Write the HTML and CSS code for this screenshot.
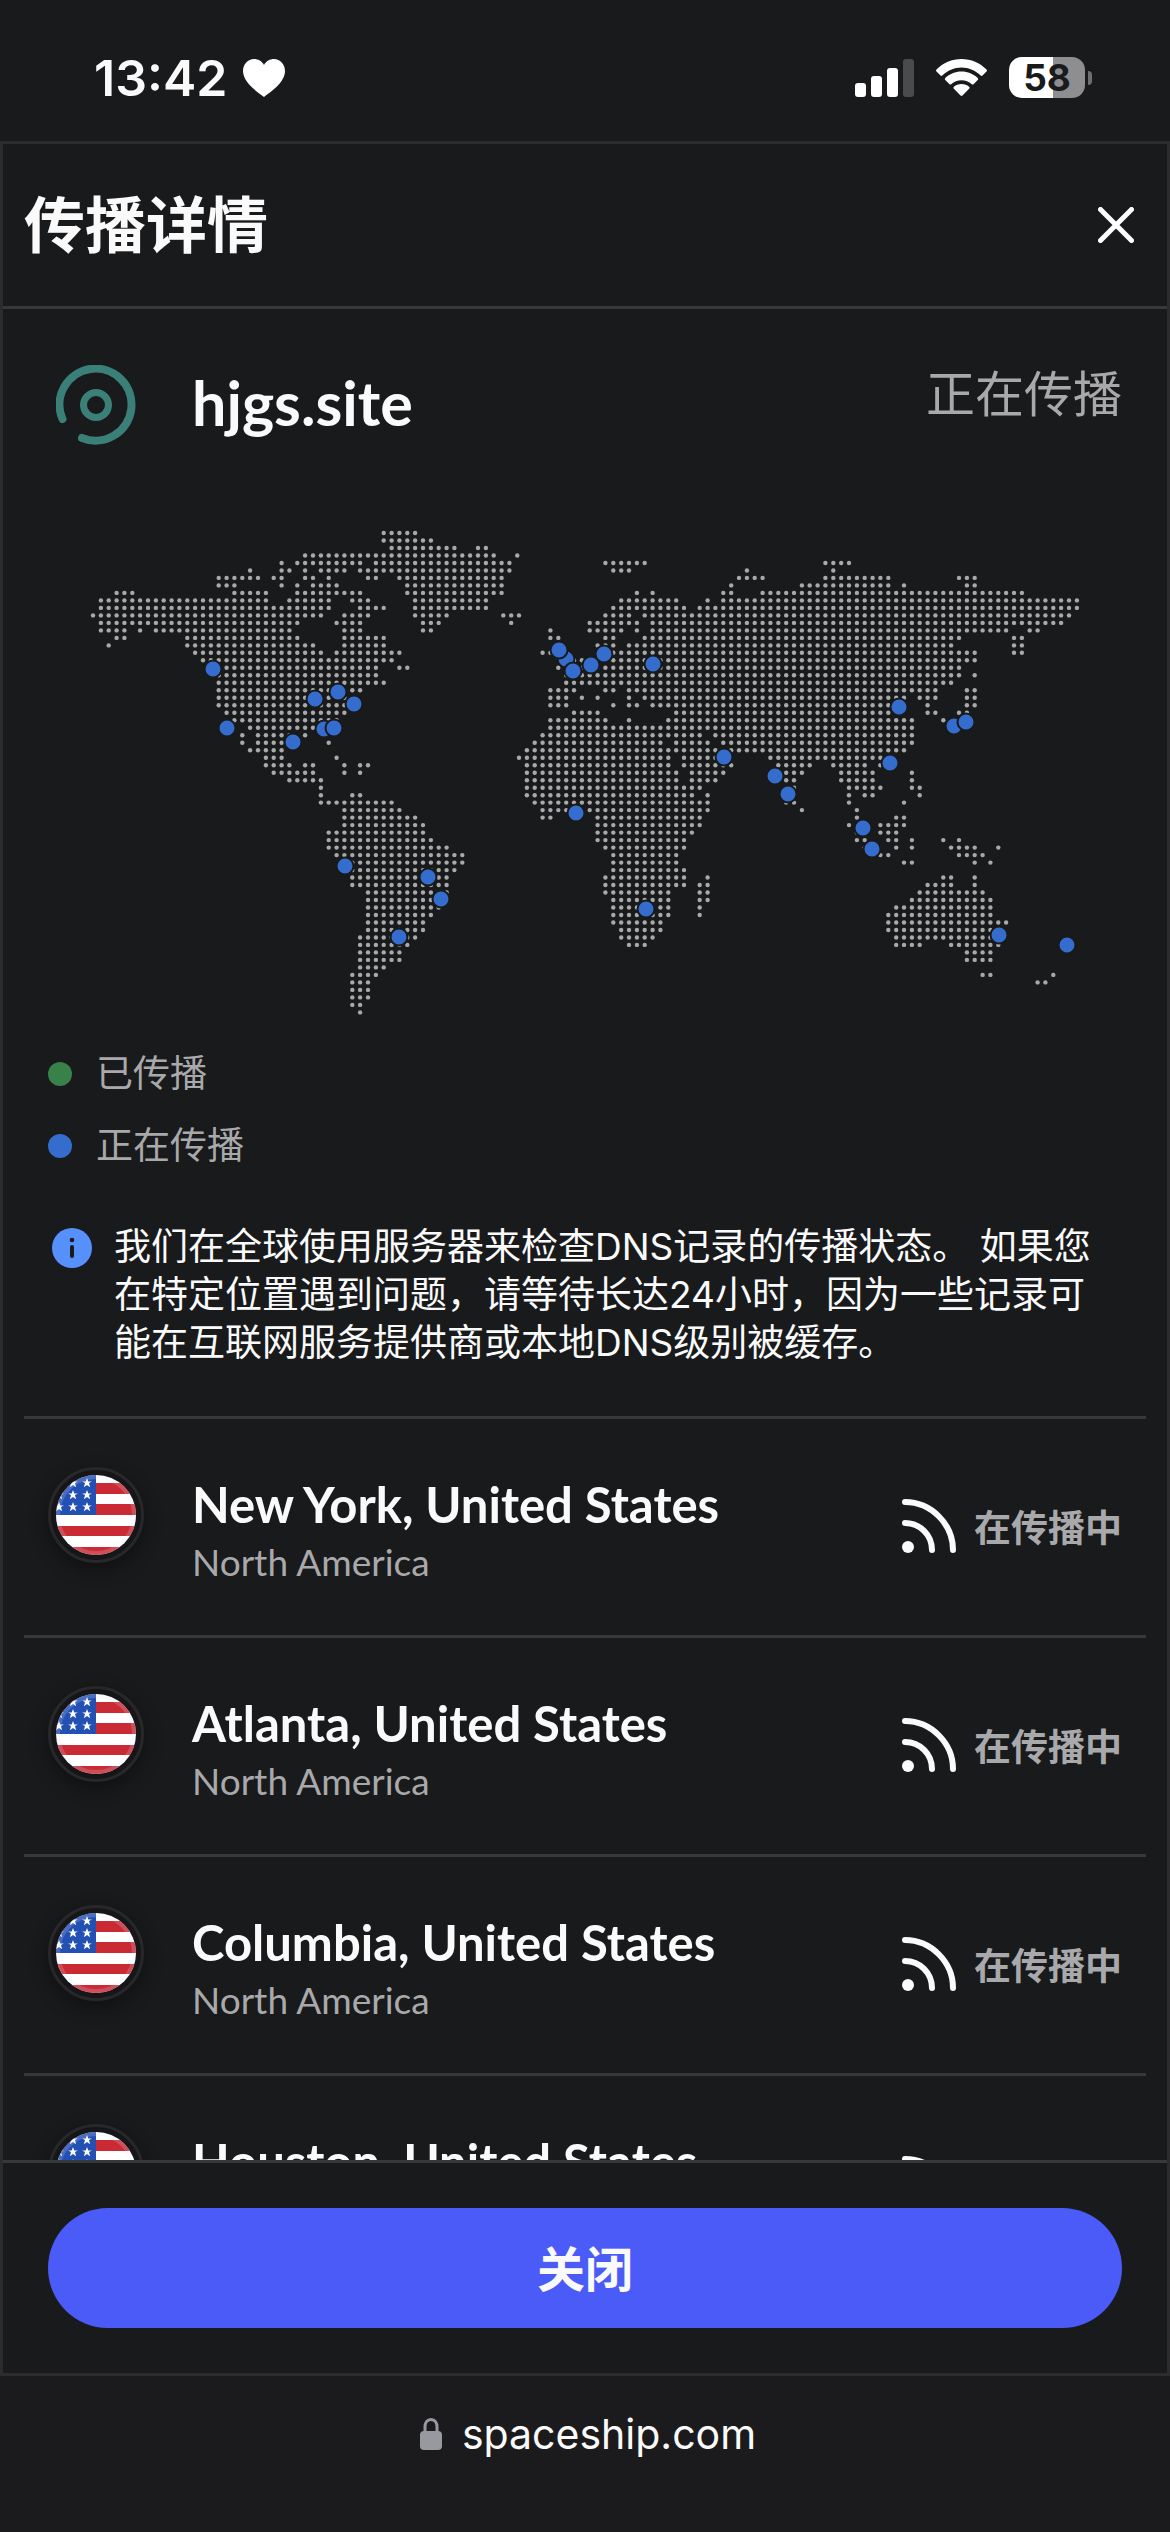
FILE: index.html
```html
<!DOCTYPE html>
<html lang="zh-CN">
<head>
  <meta charset="UTF-8">
  <meta name="viewport" content="width=device-width, initial-scale=1.0">
  <title>传播详情</title>
  <link rel="stylesheet" href="styles.css">
</head>
<body>
  <!-- shared icons -->
  <svg class="sprite" aria-hidden="true">
    <defs>
      <clipPath id="flag-clip"><circle cx="40" cy="40" r="40"/></clipPath>
      <path id="star" d="M0-5 1.3-1.6 4.9-1.5 2-.1 3.1 4.2 0 1.9-3.1 4.2-2-.1-4.9-1.5-1.3-1.6z" fill="#fff"/>
      <symbol id="flag-us" viewBox="0 0 80 80">
        <g clip-path="url(#flag-clip)">
          <path d="M0 0h80v80H0z" fill="#fff"/>
          <path d="M0 8h80v11H0zM0 29h80v11H0zM0 51h80v10H0zM0 72h80v8H0z" fill="#c92a33"/>
          <path d="M0 0h40v40H0z" fill="#2350b3"/>
          <use href="#star" x="17" y="8"/><use href="#star" x="31" y="8"/>
          <use href="#star" x="3" y="20"/><use href="#star" x="17" y="20"/><use href="#star" x="31" y="20"/>
          <use href="#star" x="3" y="32"/><use href="#star" x="17" y="32"/><use href="#star" x="31" y="32"/>
          <circle cx="40" cy="40" r="38" fill="none" stroke="#dfe6f5" stroke-opacity=".2" stroke-width="4"/>
        </g>
      </symbol>
      <symbol id="feed" viewBox="0 0 54 54">
        <circle cx="6" cy="48" r="6" fill="#fafafb"/>
        <path d="M3 3C29 3 51 25 51 51M3 24C18 24 30 36 30 51" fill="none" stroke="#fafafb" stroke-width="6" stroke-linecap="round"/>
      </symbol>
    </defs>
  </svg>

  <div class="status-bar">
    <div class="status-left">
      <span class="time">13:42</span>
      <svg class="heart" viewBox="0 0 42 38"><path d="M21 38C13 32 0 23 0 12 0 5 5 0 11 0c4 0 8 2 10 6 2-4 6-6 10-6 6 0 11 5 11 12 0 11-13 20-21 26z" fill="#fff"/></svg>
    </div>
    <div class="status-right">
      <svg class="signal" viewBox="0 0 59 38" fill="#fff">
        <rect x="0" y="24" width="11" height="14" rx="3"/>
        <rect x="16" y="17" width="11" height="21" rx="3"/>
        <rect x="32" y="9" width="11" height="29" rx="3"/>
        <rect x="48" y="0" width="11" height="38" rx="3" fill="#4a4b4d"/>
      </svg>
      <svg class="wifi" viewBox="0 0 51 37" fill="#fff">
        <path d="M25.500 0C35 0 44 4 50.500 10.500c.6.600.6 1.400 0 2L46.500 16.500c-.5.500-1.300.5-1.800 0C39.500 11.500 32.800 8.500 25.500 8.500S11.500 11.500 6.300 16.500c-.5.500-1.300.5-1.800 0L.5 12.500c-.6-.6-.6-1.400 0-2C7 4 16 0 25.500 0z"/>
        <path d="M25.500 12.500c6.300 0 12 2.500 16.200 6.500.6.600.6 1.400 0 2l-4.200 4.200c-.5.500-1.200.5-1.700 0-2.800-2.500-6.400-4-10.300-4s-7.500 1.500-10.300 4c-.5.500-1.200.5-1.700 0L9.300 21c-.6-.6-.6-1.400 0-2 4.200-4 9.900-6.500 16.200-6.500z"/>
        <path d="M25.500 25c3 0 5.600 1 7.600 2.800.6.500.6 1.300 0 1.900l-6.600 6.800c-.6.600-1.400.6-2 0l-6.600-6.800c-.6-.6-.6-1.400 0-1.900C19.900 26 22.500 25 25.500 25z"/>
      </svg>
      <div class="battery"><span>58</span></div>
    </div>
  </div>

  <main class="sheet">
    <header class="sheet-header">
      <h1>传播详情</h1>
      <button class="close-icon" aria-label="关闭">
        <svg viewBox="0 0 36 36"><path d="M2.500 2.500l31 31M33.500 2.500l-31 31" stroke="#fff" stroke-width="5" stroke-linecap="round"/></svg>
      </button>
    </header>

    <div class="sheet-body">
      <section class="domain">
        <svg class="domain-logo" viewBox="0 0 80 80" fill="none" stroke="#3a8078">
          <path d="M6.500 54A36 36 0 1 1 26 73" stroke-width="8" stroke-linecap="round"/>
          <circle cx="40" cy="40" r="12.500" stroke-width="7"/>
        </svg>
        <h2>hjgs.site</h2>
        <span class="domain-status">正在传播</span>
      </section>

      <svg class="map" id="map" viewBox="0 0 1074 492" role="img" aria-label="DNS"></svg>

      <ul class="legend">
        <li><i class="dot done"></i>已传播</li>
        <li><i class="dot pending"></i>正在传播</li>
      </ul>

      <div class="notice">
        <svg class="info" viewBox="0 0 40 40">
          <circle cx="20" cy="20" r="20" fill="#5590fb"/>
          <circle cx="20" cy="12" r="2.300" fill="#191a1c"/>
          <path d="M20 19v9" stroke="#191a1c" stroke-width="4" stroke-linecap="round"/>
        </svg>
        <p>我们在全球使用服务器来检查DNS记录的传播状态。 如果您在特定位置遇到问题，请等待长达24小时，因为一些记录可能在互联网服务提供商或本地DNS级别被缓存。</p>
      </div>

      <ul class="servers">
        <li>
          <div class="flag"><svg><use href="#flag-us"/></svg></div>
          <div class="place"><h3>New York, United States</h3><p>North America</p></div>
          <div class="state"><svg><use href="#feed"/></svg>在传播中</div>
        </li>
        <li>
          <div class="flag"><svg><use href="#flag-us"/></svg></div>
          <div class="place"><h3>Atlanta, United States</h3><p>North America</p></div>
          <div class="state"><svg><use href="#feed"/></svg>在传播中</div>
        </li>
        <li>
          <div class="flag"><svg><use href="#flag-us"/></svg></div>
          <div class="place"><h3>Columbia, United States</h3><p>North America</p></div>
          <div class="state"><svg><use href="#feed"/></svg>在传播中</div>
        </li>
        <li>
          <div class="flag"><svg><use href="#flag-us"/></svg></div>
          <div class="place"><h3>Houston, United States</h3><p>North America</p></div>
          <div class="state"><svg><use href="#feed"/></svg>在传播中</div>
        </li>
      </ul>
    </div>

    <footer class="sheet-footer">
      <button class="close-button">关闭</button>
    </footer>
  </main>

  <div class="address-bar">
    <svg class="lock" viewBox="0 0 22 32">
      <path d="M5 15V9c0-4 2-7.500 6-7.500S17 5 17 9v6" fill="none" stroke="#98989f" stroke-width="3"/>
      <rect y="13" width="22" height="19" rx="4" fill="#98989f"/>
    </svg>
    <span>spaceship.com</span>
  </div>

  <script src="map.js"></script>
</body>
</html>
```
FILE: styles.css
```css
* {
  box-sizing: border-box;
  margin: 0;
  padding: 0;
}
body {
  display: flex;
  flex-direction: column;
  height: 100vh;
  overflow: hidden;
  background: #191a1c;
  color: #fafafb;
  font-family: Lato, 'Noto Sans CJK SC', sans-serif;
}
svg {
  display: block;
  flex-shrink: 0;
}
ul {
  list-style: none;
}
button {
  border: none;
  background: none;
  color: inherit;
  font-family: inherit;
  cursor: pointer;
}
.sprite {
  position: absolute;
  width: 0;
  height: 0;
}

/* phone status bar */
.status-bar {
  display: flex;
  justify-content: space-between;
  align-items: center;
  height: 141px;
  padding: 14px 78px 0 94px;
  font-family: Inter, sans-serif;
}
.status-left {
  display: flex;
  align-items: center;
  gap: 16px;
}
.time {
  font-size: 50px;
  font-weight: 600;
}
.heart {
  width: 42px;
  height: 38px;
}
.status-right {
  display: flex;
  align-items: center;
  gap: 22px;
}
.signal {
  width: 59px;
  height: 38px;
}
.wifi {
  width: 51px;
  height: 37px;
}
.battery {
  position: relative;
  width: 76px;
  height: 41px;
  margin-right: 7px;
  border-radius: 13px;
  background: linear-gradient(to right, #fff 58%, #8e8e90 58%);
  color: #191a1c;
  font-size: 37px;
  font-weight: 700;
  line-height: 41px;
  text-align: center;
}
.battery::after {
  content: '';
  position: absolute;
  top: 14px;
  right: -7px;
  width: 4px;
  height: 14px;
  border-radius: 0 4px 4px 0;
  background: #6f6f71;
}

/* sheet */
.sheet {
  flex: 1;
  display: flex;
  flex-direction: column;
  min-height: 0;
  border: 3px solid #2c2c2f;
}
.sheet-header {
  display: flex;
  justify-content: space-between;
  align-items: center;
  height: 165px;
  padding: 0 33px 0 21px;
  border-bottom: 3px solid #38383b;
}
.sheet-header h1 {
  padding-bottom: 8px;
  font-size: 61px;
  font-weight: 700;
}
.close-icon svg {
  width: 36px;
  height: 36px;
}
.sheet-body {
  flex: 1;
  min-height: 0;
  overflow: hidden;
  padding: 0 21px;
}
.domain {
  display: flex;
  align-items: flex-start;
  height: 220px;
  padding: 56px 24px 0 32px;
}
.domain-logo {
  width: 80px;
  height: 80px;
  margin-right: 56px;
}
.domain h2 {
  flex: 1;
  font-size: 61px;
  font-weight: 700;
  line-height: 76px;
}
.domain-status {
  color: #a9a9ab;
  font-size: 49px;
  line-height: 56px;
}
.map {
  width: calc(100% - 48px);
  margin: 0 24px;
}
.legend {
  padding: 17px 24px 0;
  color: #a9a9ab;
  font-size: 37px;
  line-height: 48px;
}
.legend li {
  display: flex;
  align-items: flex-start;
  height: 72px;
  padding-top: 11px;
}
.dot {
  width: 24px;
  height: 24px;
  margin: 13px 24px 0 0;
  border-radius: 50%;
}
.dot.done {
  background: #388148;
}
.dot.pending {
  background: #356dce;
}
.notice {
  display: flex;
  padding: 41px 40px 49px 28px;
}
.info {
  width: 40px;
  height: 40px;
  margin: 5px 22px 0 0;
}
.notice p {
  font-family: Inter, 'Noto Sans CJK SC', sans-serif;
  font-size: 37px;
  line-height: 48px;
}

/* server list */
.servers li {
  display: flex;
  align-items: flex-start;
  height: 219px;
  padding: 48px 24px;
  border-top: 3px solid #38383b;
}
.flag {
  padding: 5px;
  margin-right: 48px;
  border: 3px solid #28282b;
  border-radius: 50%;
  background: #161618;
  box-shadow: 0 6px 18px rgba(0, 0, 0, 0.4);
}
.flag svg {
  width: 80px;
  height: 80px;
}
.place {
  flex: 1;
}
.place h3 {
  font-size: 49px;
  font-weight: 700;
  line-height: 74px;
}
.place p {
  color: #a9a9ab;
  font-size: 37px;
  line-height: 42px;
}
.state {
  display: flex;
  align-items: center;
  gap: 18px;
  height: 117px;
  color: #a9a9ab;
  font-size: 37px;
  font-weight: 700;
}
.state svg {
  width: 54px;
  height: 54px;
}
.sheet-footer {
  height: 213px;
  padding: 45px 45px 0;
  border-top: 3px solid #38383b;
}
.close-button {
  width: 100%;
  height: 120px;
  padding-bottom: 4px;
  border-radius: 60px;
  background: #4b5bf7;
  font-size: 48px;
  font-weight: 700;
}

/* browser address bar */
.address-bar {
  display: flex;
  justify-content: center;
  align-items: flex-start;
  gap: 20px;
  height: 156px;
  padding: 32px 0 0 6px;
  background: #1b1b1d;
  font-family: Inter, sans-serif;
  font-size: 41px;
  line-height: 52px;
}
.lock {
  width: 22px;
  height: 32px;
  margin-top: 10px;
}
```
FILE: map.js
```js
// dotted world map: one string per row, "from-to" runs of dots
const STEP_X = 7.857;
const STEP_Y = 7.49;

const americas = [
  '37-41', '37-43', '38-46 49-50', '27-51 54', '24 26-34 36-53', '20 24-25 27 29-32 34-53',
  '16-21 23-24 27-28 30 35-36 39-52', '16-18 24 26 28-31 40-52', '3-5 18-22 26-34 40-52',
  '1-22 25-30 33-35 41-50', '1-30 34-37 41-50', '0-29 32-35 41-45', '1-26 31-34 42-44',
  '1-4 6 8-25 32-34 42-43', '3-4 12-26 32-37', '2 12-28 32-37', '13-29 31-39', '14-38',
  '17-36 39-40', '16-36', '16-37', '16-34', '16-32', '16-32', '17-32', '18-31', '20-29',
  '19 21-25 27', '19 21-24 30', '20-24', '22-24 31', '22-25 27-28 32 34-35', '23-28 32 34',
  '25-29', '29', '29 33-34', '29-38', '32-39', '32-41', '32-42', '30-42', '30-43', '30-45',
  '31-47', '33-47', '33-46', '33-45', '33-45', '35-45', '35-44', '35-44', '35-43', '35-42',
  '35-42', '34-41', '34-40', '34-39', '34-39', '34-37', '33-36', '33-35', '33-35', '33-35',
  '33-34', '34'
];

const eurasia = [
  '', '', '', '', '13-18 41-44', '14-16 31 42', '30-33 41-49 58-60', '29 38-49 51 59-60',
  '17 19 28-29 33-66', '15-22 26 28-73', '14-23 25-73', '0-2 13-16 18-72', '1 11-17 19-71',
  '6 11-15 17 19-64 67-68', '6-7 13-14 18-58 65-66', '7 12-14 16-57 65-66', '5-8 13-60 65-66',
  '9-10 12-60', '7 10-58', '8-58 60', '8-57', '6-9 13-14 16-55 59-60',
  '6-8 10 12 16 18-51 53-55 59-60', '6-8 14 16-17 19-50 54 59-60', '9-12 22-50 54-55 58-59',
  '6-13 16 21-52 56', '6-52', '5-25 27-52', '4-20 22-26 28-52', '3-51', '2-21 23-28 34-48',
  '3-21 23-29 35-39 42-46 48', '3-22 24-28 36-38 43-47 52', '3-22 24-27 36-37 43-47 52',
  '3-25 36-37 44-48 52-53', '3-24 26 36-37 44 46-47 53', '4-26 36-37 44 51', '5-8 11-26 38 45',
  '5-6 12-25 45 50-51', '12-25 44 48-51', '12-24 45 48-50', '12-23 45-46 49-50 52 56 58',
  '13-23 46-47 50 52 57-60 63', '14-22 48-49 58-61', '14-22 51-52 60 62', '14-23',
  '13-23 26 56-57 60', '13-23 25-26 54-57 60', '13-21 25-26 53-61', '14-21 25-26 52-62',
  '14-21 25 50-62', '14-21 25 49-62', '14-20 49-64', '15-20 49-63', '15-19 50-63',
  '16-18 50-53 57-63', '59-62', '59-62', '', '61-62 70', '68-69'
];

const pins = [
  [165, 140], [179, 199], [245, 213], [267, 170], [290, 163], [306, 175], [276, 200], [286, 199],
  [518, 130], [511, 121], [525, 142], [543, 136], [556, 125], [605, 135], [676, 228],
  [851, 178], [906, 197], [918, 193], [842, 234], [727, 247], [740, 265], [528, 284], [598, 380],
  [297, 337], [380, 348], [393, 370], [351, 408], [815, 299], [824, 320], [951, 406], [1019, 416]
];

function drawLand(rows, left) {
  let dots = '';
  rows.forEach((row, r) => {
    row.split(' ').filter(Boolean).forEach(run => {
      const [from, to = from] = run.split('-').map(Number);
      for (let c = from; c <= to; c++) {
        dots += `<circle cx="${(left + c * STEP_X).toFixed(1)}" cy="${(4 + r * STEP_Y).toFixed(1)}" r="2.2"/>`;
      }
    });
  });
  return dots;
}

document.getElementById('map').innerHTML =
  '<g fill="#a9a9a9">' + drawLand(americas, 45) + drawLand(eurasia, 455.3) + '</g>' +
  '<g fill="#356dce" stroke="#191a1c" stroke-width="2">' +
  pins.map(([x, y]) => `<circle cx="${x}" cy="${y}" r="8.5"/>`).join('') + '</g>';
```
